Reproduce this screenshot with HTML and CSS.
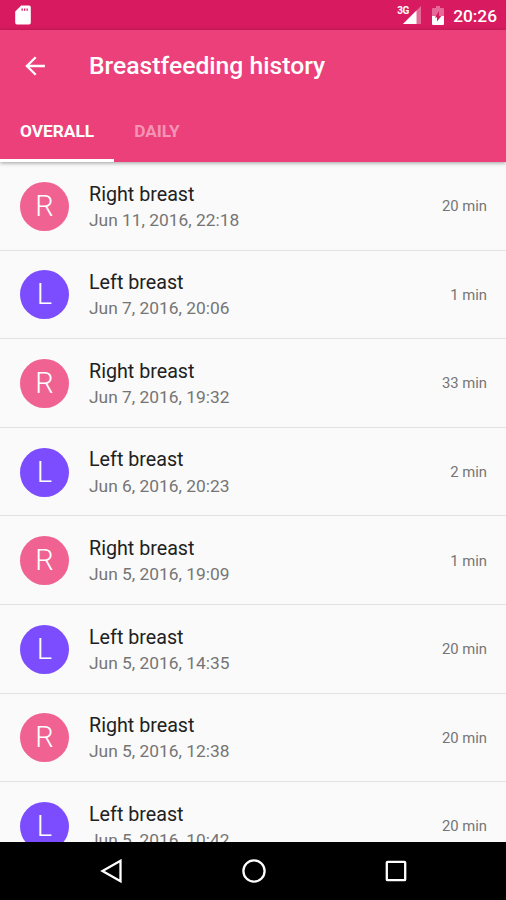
FILE: index.html
```html
<!DOCTYPE html>
<html lang="en">
<head>
<meta charset="utf-8">
<title>Breastfeeding history</title>
<link rel="stylesheet" href="styles.css">
</head>
<body>
<div class="screen">
  <div class="status">
    <svg class="sd" width="16" height="20" viewBox="0 0 16 20"><path fill="#fff" fill-rule="evenodd" d="M6.2 .5H14a1.8 1.8 0 0 1 1.8 1.8v15.4a1.8 1.8 0 0 1-1.8 1.8H2A1.8 1.8 0 0 1 .2 17.700V6.500zM6.500 3.500v2.200h1.300V3.500zm2.500 0v2.200h1.300V3.500zm2.500 0v2.200h1.300V3.500z"/></svg>
    <span class="net">3G</span>
    <svg class="signal" width="18" height="18" viewBox="0 0 18 18"><path fill="#fff" fill-opacity=".35" d="M18 0v18H0z"/><path fill="#fff" d="M13.500 4.500V18H0z"/></svg>
    <svg class="battery" width="12" height="19" viewBox="0 0 12 19"><path fill="#fff" fill-opacity=".35" d="M4 0h4v2h3a1 1 0 0 1 1 1v7H0V3a1 1 0 0 1 1-1h3z"/><path fill="#fff" d="M0 10h12v8a1 1 0 0 1-1 1H1a1 1 0 0 1-1-1z"/><path fill="#d81b60" d="M7 5v5h2.300L5 15.500V11.500H2.900z"/></svg>
    <span class="clock">20:26</span>
  </div>
  <header class="header">
    <div class="toolbar">
      <svg class="back" width="20" height="20" viewBox="0 0 20 20"><path fill="none" stroke="#fff" stroke-width="2.300" d="M19.900 10H2M10.700 1.200L1.900 10l8.800 8.800"/></svg>
      <h1 class="title">Breastfeeding history</h1>
    </div>
    <nav class="tabs"><span class="tab active">OVERALL</span><span class="tab">DAILY</span></nav>
  </header>
  <main class="list">
    <div class="row"><div class="avatar">R</div><div class="text"><div class="name">Right breast</div><div class="date">Jun 11, 2016, 22:18</div></div><div class="time">20 min</div></div>
    <div class="row"><div class="avatar left">L</div><div class="text"><div class="name">Left breast</div><div class="date">Jun 7, 2016, 20:06</div></div><div class="time">1 min</div></div>
    <div class="row"><div class="avatar">R</div><div class="text"><div class="name">Right breast</div><div class="date">Jun 7, 2016, 19:32</div></div><div class="time">33 min</div></div>
    <div class="row"><div class="avatar left">L</div><div class="text"><div class="name">Left breast</div><div class="date">Jun 6, 2016, 20:23</div></div><div class="time">2 min</div></div>
    <div class="row"><div class="avatar">R</div><div class="text"><div class="name">Right breast</div><div class="date">Jun 5, 2016, 19:09</div></div><div class="time">1 min</div></div>
    <div class="row"><div class="avatar left">L</div><div class="text"><div class="name">Left breast</div><div class="date">Jun 5, 2016, 14:35</div></div><div class="time">20 min</div></div>
    <div class="row"><div class="avatar">R</div><div class="text"><div class="name">Right breast</div><div class="date">Jun 5, 2016, 12:38</div></div><div class="time">20 min</div></div>
    <div class="row"><div class="avatar left">L</div><div class="text"><div class="name">Left breast</div><div class="date">Jun 5, 2016, 10:42</div></div><div class="time">20 min</div></div>
  </main>
  <footer class="navbar">
    <svg width="24" height="24" viewBox="0 0 24 24"><path d="M20.500 1.800v20.400L2.500 12z"/></svg>
    <svg width="24" height="24" viewBox="0 0 24 24"><circle cx="12" cy="12" r="10.600"/></svg>
    <svg width="24" height="24" viewBox="0 0 24 24"><rect x="2.800" y="2.800" width="18.400" height="18.400" rx=".8"/></svg>
  </footer>
</div>
</body>
</html>
```
FILE: styles.css
```css
* { box-sizing: border-box; }
body { margin: 0; font-family: Roboto, "Liberation Sans", sans-serif; }
.screen { width: 506px; height: 900px; display: flex; flex-direction: column; overflow: hidden; background: #fafafa; }
.status { flex: none; height: 30px; background: #d81b60; color: #fff; display: flex; align-items: flex-start; padding: 5px 9px 0 15px; }
.net { margin-left: auto; font-size: 10px; line-height: 10px; font-weight: 700; margin-top: 1px; letter-spacing: -.3px; }
.signal { margin: 1px 0 0 -6px; }
.battery { margin: 1px 0 0 11px; }
.clock { margin-left: 9px; font-size: 17.300px; line-height: 22px; font-weight: 500; }
.header { flex: none; height: 132px; background: #ec407a; color: #fff; position: relative; z-index: 1; box-shadow: 0 1px 4px rgba(0,0,0,.38); }
.toolbar { height: 71px; display: flex; align-items: center; padding-left: 25px; }
.title { margin: 0 0 0 44px; font-size: 24.700px; line-height: 30px; font-weight: 500; }
.tabs { height: 61px; display: flex; }
.tab { padding: 0 20px; line-height: 60px; font-size: 17.300px; font-weight: 700; color: rgba(255,255,255,.45); }
.tab.active { color: #fff; border-bottom: 3px solid #fff; }
.list { height: 680px; overflow: hidden; }
.row { height: 88.600px; display: flex; align-items: center; padding: 1px 19px 0 20px; border-bottom: 1px solid #e2e2e2; }
.avatar { width: 49px; height: 49px; border-radius: 50%; background: #f06292; color: #fff; font-size: 29px; font-weight: 300; line-height: 49px; text-align: center; }
.left { background: #7c4dff; }
.text { margin-left: 20px; flex: 1; padding-top: 2px; }
.name { font-size: 19.700px; line-height: 26px; color: #212121; }
.date { margin-top: -.8px; font-size: 17.370px; line-height: 26px; color: #757575; }
.time { font-size: 14.800px; color: #757575; }
.navbar { flex: none; height: 58px; background: #000; display: flex; justify-content: center; align-items: center; gap: 118px; padding-left: 2px; }
.navbar svg { fill: none; stroke: #fff; stroke-width: 2.300; }
```
